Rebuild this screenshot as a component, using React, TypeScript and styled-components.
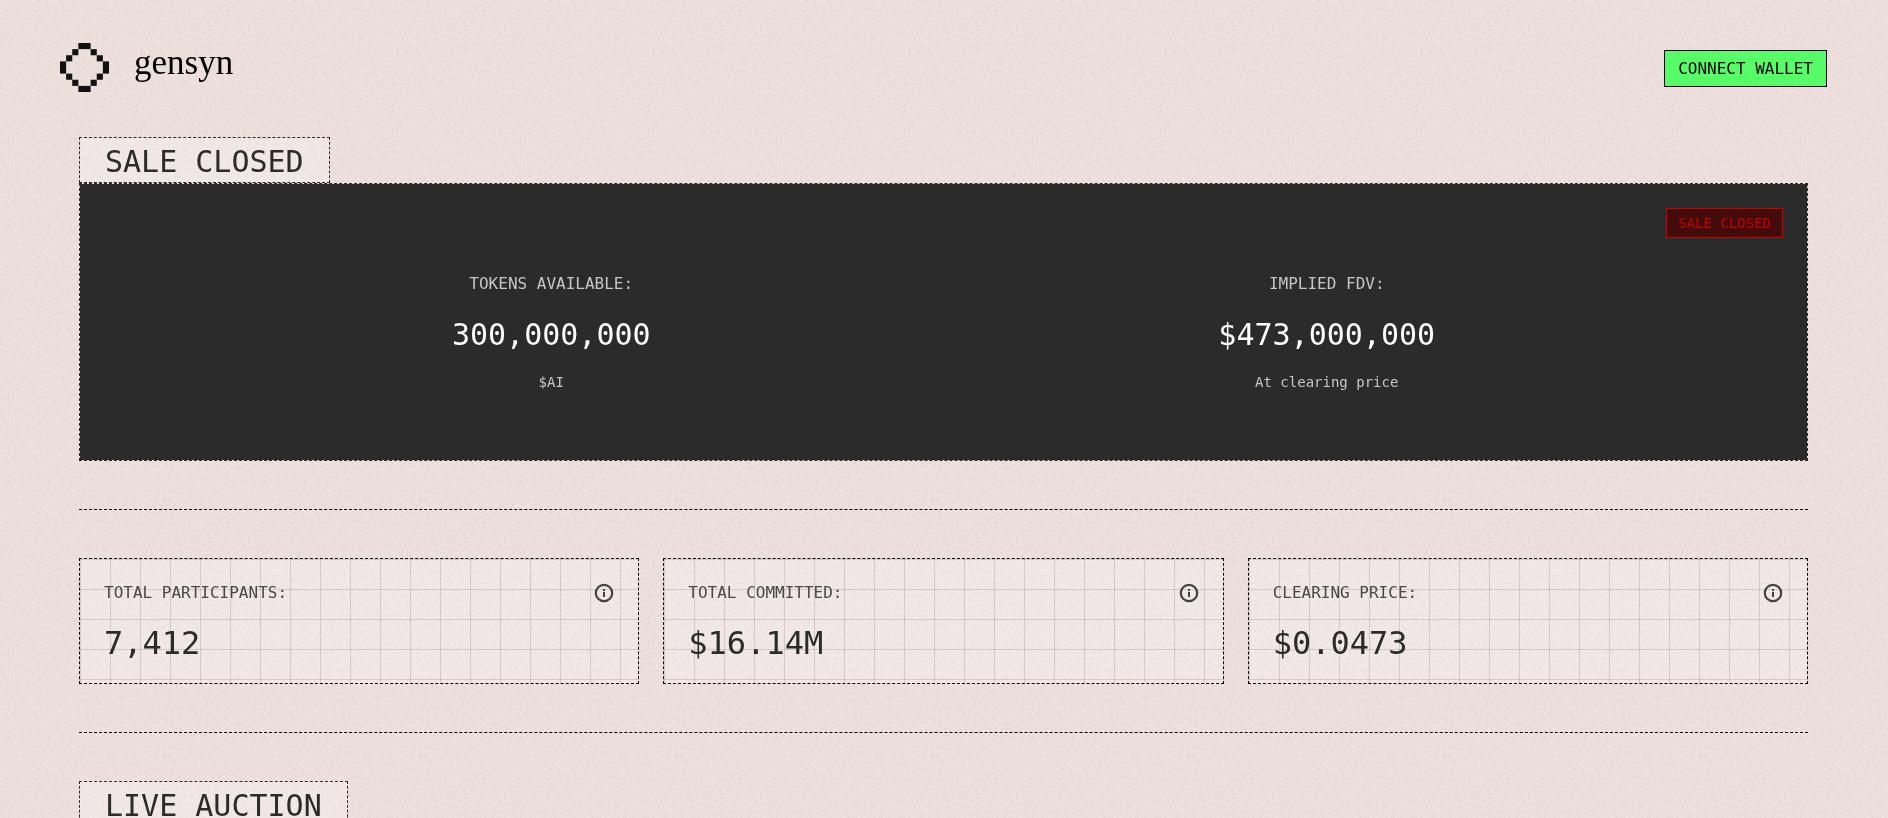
import React from 'react';
import styled, { createGlobalStyle } from 'styled-components';

const INK = '#2b2b2b';

const grain = encodeURIComponent(
  `<svg xmlns="http://www.w3.org/2000/svg" width="256" height="256"><filter id="n" x="0" y="0" width="100%" height="100%" color-interpolation-filters="sRGB"><feTurbulence type="fractalNoise" baseFrequency="0.4" numOctaves="3" seed="4" stitchTiles="stitch"/><feColorMatrix values="0 0 0 0 0.6  0 0 0 0 0.58  0 0 0 0 0.64  1.5 0.6 0 0 -0.88"/></filter><rect width="256" height="256" filter="url(#n)"/></svg>`
);

const GlobalStyle = createGlobalStyle`
  *, *::before, *::after { box-sizing: border-box; }
  html { scrollbar-width: none; }
  body {
    margin: 0;
    background: #eee1de;
    color: ${INK};
    font-family: "DejaVu Sans Mono", "Liberation Mono", monospace;
    font-size: 16px;
  }
  h2, p { margin: 0; font-weight: 400; }
`;

const Page = styled.div`
  position: relative;
  padding-bottom: 48px;
  &::after {
    content: '';
    position: absolute;
    inset: 0;
    pointer-events: none;
    mix-blend-mode: multiply;
    opacity: 0.14;
    background: url("data:image/svg+xml,${grain}");
  }
`;

const Header = styled.header`
  display: flex;
  align-items: center;
  justify-content: space-between;
  padding: 43px 61px 43px 60px;
`;

const Brand = styled.a`
  display: flex;
  align-items: center;
  gap: 25px;
  padding-bottom: 2px;
  color: #000;
  text-decoration: none;
`;

const Mark = styled.svg`
  display: block;
  width: 49px;
  height: 49px;
`;

const Wordmark = styled.span`
  font-family: "Liberation Serif", serif;
  font-size: 35px;
  line-height: 38px;
  padding-bottom: 9px;
`;

const WalletButton = styled.button`
  border: 1px solid #000;
  background: #57ff68;
  color: #000;
  font: inherit;
  line-height: 23px;
  padding: 6px 13px;
  cursor: pointer;
`;

const Main = styled.main`
  margin: 0 80px 0 79px;
`;

const SectionTitle = styled.h2`
  width: fit-content;
  border: 1px dashed ${INK};
  background: rgba(255, 255, 255, 0.3);
  padding: 9px 25px 5px;
  font-size: 30px;
  line-height: 30px;
`;

const Panel = styled.section`
  display: flex;
  flex-direction: column;
  border: 1px dashed ${INK};
  background: ${INK};
  background-clip: padding-box;
  padding: 24px;
`;

const Badge = styled.span`
  align-self: flex-end;
  border: 1px solid #cc0000;
  background: #430c0a;
  color: #cc0000;
  padding: 4px 11px;
  font-size: 14px;
  line-height: 20px;
`;

const Figures = styled.div`
  display: flex;
  justify-content: space-around;
  padding: 34px 64px 46px;
`;

const Figure = styled.div`
  display: flex;
  flex-direction: column;
  align-items: center;
  gap: 18px;
`;

const FigureLabel = styled.p`
  color: #c8c8c8;
  line-height: 24px;
`;

const FigureValue = styled.p`
  color: #fff;
  font-size: 30px;
  line-height: 42px;
`;

const FigureNote = styled.p`
  color: #c8c8c8;
  font-size: 14px;
  line-height: 16px;
`;

const Divider = styled.hr`
  height: 0;
  margin: 48px 0;
  border: 0;
  border-top: 1px dashed #000;
`;

const Cards = styled.div`
  display: grid;
  grid-template-columns: repeat(3, 1fr);
  gap: 24px;
`;

const Card = styled.article`
  display: flex;
  flex-direction: column;
  gap: 24px;
  border: 1px dashed #000;
  padding: 24px;
  background:
    linear-gradient(to right, rgba(43, 35, 43, 0.15) 1px, transparent 1px) 0 0 / 30px 30px,
    linear-gradient(to bottom, rgba(43, 35, 43, 0.15) 1px, transparent 1px) 0 0 / 30px 30px,
    rgba(255, 255, 255, 0.3);
`;

const CardHead = styled.div`
  display: flex;
  align-items: center;
  justify-content: space-between;
  color: #4a4848;
  line-height: 20px;
`;

const InfoButton = styled.button`
  display: flex;
  border: 0;
  padding: 0;
  background: none;
  color: #444;
  cursor: pointer;
`;

const CardValue = styled.p`
  font-size: 32px;
  line-height: 32px;
`;

const cells = [
  [3, 0, 2, 1], [2, 1, 1, 1], [5, 1, 1, 1], [1, 2, 1, 1], [6, 2, 1, 1],
  [0, 3, 1, 2], [7, 3, 1, 2],
  [1, 5, 1, 1], [6, 5, 1, 1], [2, 6, 1, 1], [5, 6, 1, 1], [3, 7, 2, 1],
];

const figures = [
  { label: 'TOKENS AVAILABLE:', value: '300,000,000', note: '$AI' },
  { label: 'IMPLIED FDV:', value: '$473,000,000', note: 'At clearing price' },
];

const stats = [
  { label: 'TOTAL PARTICIPANTS:', value: '7,412' },
  { label: 'TOTAL COMMITTED:', value: '$16.14M' },
  { label: 'CLEARING PRICE:', value: '$0.0473' },
];

const InfoIcon = () => (
  <svg width="20" height="20" viewBox="0 0 20 20" aria-hidden="true">
    <circle cx="10" cy="10" r="8.2" fill="none" stroke="currentColor" strokeWidth="2.2" />
    <rect x="9" y="6" width="2" height="2" fill="currentColor" />
    <rect x="9" y="9" width="2" height="5" fill="currentColor" />
  </svg>
);

export default function App() {
  return (
    <>
      <GlobalStyle />
      <Page>
        <Header>
          <Brand href="#">
            <Mark viewBox="0 0 8 8" aria-hidden="true">
              {cells.map(([x, y, w, h]) => (
                <rect key={`${x}-${y}`} x={x} y={y} width={w} height={h} fill="#111" />
              ))}
            </Mark>
            <Wordmark>gensyn</Wordmark>
          </Brand>
          <WalletButton type="button">CONNECT WALLET</WalletButton>
        </Header>
        <Main>
          <SectionTitle>SALE CLOSED</SectionTitle>
          <Panel>
            <Badge>SALE CLOSED</Badge>
            <Figures>
              {figures.map((f) => (
                <Figure key={f.label}>
                  <FigureLabel>{f.label}</FigureLabel>
                  <FigureValue>{f.value}</FigureValue>
                  <FigureNote>{f.note}</FigureNote>
                </Figure>
              ))}
            </Figures>
          </Panel>
          <Divider />
          <Cards>
            {stats.map((s) => (
              <Card key={s.label}>
                <CardHead>
                  <span>{s.label}</span>
                  <InfoButton type="button" aria-label={`About ${s.label.toLowerCase()}`}>
                    <InfoIcon />
                  </InfoButton>
                </CardHead>
                <CardValue>{s.value}</CardValue>
              </Card>
            ))}
          </Cards>
          <Divider />
          <SectionTitle>LIVE AUCTION</SectionTitle>
        </Main>
      </Page>
    </>
  );
}
